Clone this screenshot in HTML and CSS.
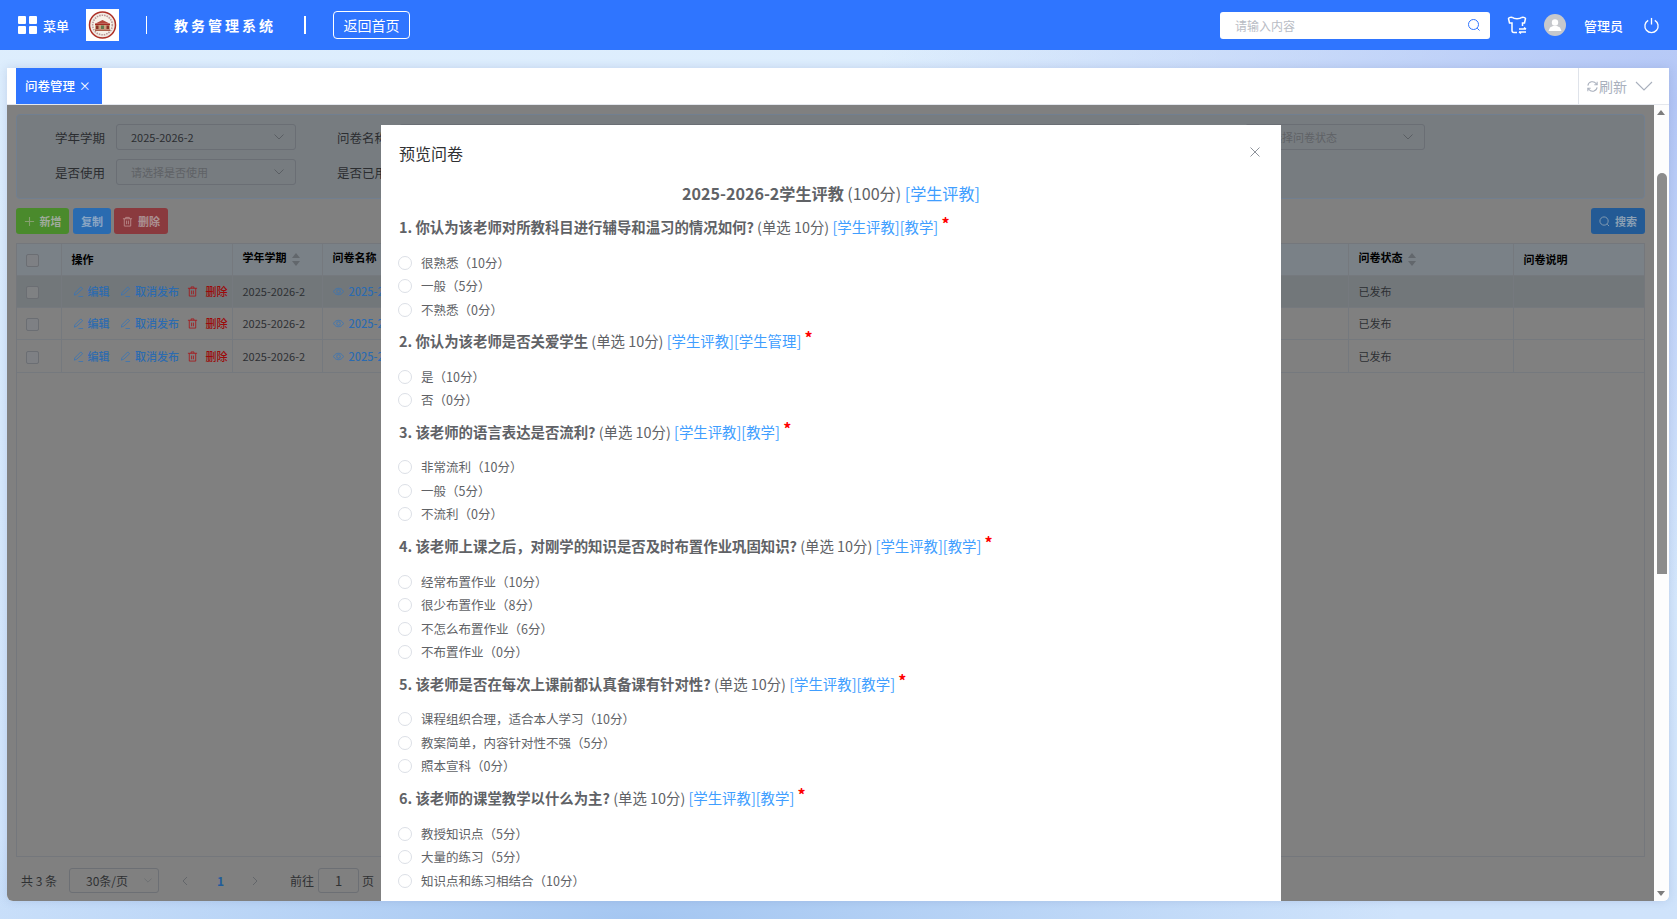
FILE: index.html
```html
<!DOCTYPE html>
<html lang="zh-CN">
<head>
<meta charset="utf-8">
<title>教务管理系统</title>
<link rel="stylesheet" href="styles.css">
</head>
<body>
<div class="app">
  <header class="topbar">
    <svg class="grid-icon" viewBox="0 0 19 18"><rect x="0" y="0" width="8" height="8" rx="1"/><rect x="11" y="0" width="8" height="8" rx="1"/><rect x="0" y="10" width="8" height="8" rx="1"/><rect x="11" y="10" width="8" height="8" rx="1"/></svg>
    <span class="menu-label">菜单</span>
    <div class="logo">
      <svg viewBox="0 0 33 32" width="33" height="32"><rect width="33" height="32" fill="#fff"/><circle cx="16.5" cy="16" r="13" fill="#f1ebe4" stroke="#ad2f26" stroke-width="1.500"/><circle cx="16.5" cy="16" r="9.800" fill="#f7f1e9" stroke="#b99" stroke-width="1.600" stroke-dasharray="1.500 1"/><path d="M9.500 14.500L16.500 11l7 3.500z" fill="#b2463a"/><rect x="9" y="14.500" width="15" height="1.600" fill="#a52a22"/><rect x="9" y="16" width="15" height="4.500" fill="#c9a27f"/><rect x="10" y="16.500" width="2.500" height="3.500" fill="#8a3328"/><rect x="15" y="16.500" width="3" height="3.500" fill="#5f7a50"/><rect x="20.500" y="16.500" width="2.500" height="3.500" fill="#8a3328"/><rect x="9" y="20.500" width="15" height="1.400" fill="#a5503a"/></svg>
    </div>
    <i class="sep-thin"></i>
    <span class="sys-title">教务管理系统</span>
    <i class="sep-thick"></i>
    <a class="home-btn">返回首页</a>
    <div class="spacer"></div>
    <div class="search-box">
      <span class="search-ph">请输入内容</span>
      <svg class="search-ic" viewBox="0 0 14 14"><circle cx="6.500" cy="6.500" r="5" fill="none" stroke="#2f75ff" stroke-width="1"/><path d="M10.200 10.200L12.500 12.500" stroke="#2f75ff" stroke-width="1" fill="none"/></svg>
    </div>
    <svg class="shirt-ic" viewBox="0 0 20 20" fill="none" stroke="#fff" stroke-width="1.500"><path d="M5.500 2.500C4 2 2 2.500 1.500 3.500L2.500 8H5V15.500C5 17 5.500 17.500 7 17.500H10M14.500 2.500C16 2 18 2.500 18.500 3.500L17.500 8H15.500V11M5.500 2.500C7 4 13 4 14.500 2.500"/><path d="M12 14h7M19 14l-2-1.500M12 17h7M12 17l2 1.500"/></svg>
    <div class="avatar"><svg viewBox="0 0 22 22" width="22" height="22"><circle cx="11" cy="8.500" r="3.200" fill="#fff"/><path d="M4.500 17l1.500-3.500 3-1.500h4l3 1.500 1.500 3.500z" fill="#fff"/></svg></div>
    <span class="user-name">管理员</span>
    <svg class="power-ic" viewBox="0 0 18 18" fill="none" stroke="#fff" stroke-width="1.400"><path d="M5.500 3.500a7 7 0 1 0 7 0"/><path d="M9 1v7"/></svg>
  </header>

  <main class="main">
    <section class="card">
      <div class="tabs">
        <div class="tab">问卷管理 <span class="tab-x">×</span></div>
        <div class="spacer"></div>
        <div class="refresh">
          <svg class="refresh-ic" viewBox="0 0 14 14" fill="none" stroke="#a9b0bd" stroke-width="1.100"><path d="M2 6a5 5 0 0 1 9-2l1 1M12 8a5 5 0 0 1-9 2L2 9"/><path d="M12 2v3H9M2 12V9h3"/></svg>
          <span>刷新</span>
          <svg class="refresh-down" viewBox="0 0 18 10" fill="none" stroke="#a9b0bd" stroke-width="1.100"><path d="M1 1l8 8 8-8"/></svg>
        </div>
      </div>

      <div class="body-row">
        <div class="content">
          <div class="filter">
            <div class="f-row">
              <label class="f-label">学年学期</label>
              <div class="select s180"><span class="val">2025-2026-2</span><svg class="chev" viewBox="0 0 10 6"><path d="M.5.5L5 5 9.500.5"/></svg></div>
              <label class="f-label f-l2">问卷名称</label>
              <div class="select s742"><span class="ph">请输入问卷名称</span></div>
              <label class="f-label f-l3">问卷状态</label>
              <div class="select s180b"><span class="ph">请选择问卷状态</span><svg class="chev" viewBox="0 0 10 6"><path d="M.5.5L5 5 9.500.5"/></svg></div>
            </div>
            <div class="f-row">
              <label class="f-label">是否使用</label>
              <div class="select s180"><span class="ph">请选择是否使用</span><svg class="chev" viewBox="0 0 10 6"><path d="M.5.5L5 5 9.500.5"/></svg></div>
              <label class="f-label f-l2">是否已用</label>
            </div>
          </div>

          <div class="toolbar">
            <button class="btn green"><svg class="btn-ic" viewBox="0 0 12 12"><path d="M6 1v10M1 6h10" stroke="#86a070" stroke-width="1.200"/></svg>新增</button>
            <button class="btn blue">复制</button>
            <button class="btn red"><svg class="btn-ic" viewBox="0 0 12 12" fill="none" stroke="#b98a8a" stroke-width="1"><path d="M1 3h10M4 3V1.500h4V3M2.500 3v8h7V3M5 5v4M7 5v4"/></svg>删除</button>
            <div class="spacer"></div>
            <button class="btn navy"><svg class="btn-ic" viewBox="0 0 12 12" fill="none" stroke="#8aa0b5" stroke-width="1"><circle cx="5.500" cy="5.500" r="4.500"/><path d="M9 9l2 2"/></svg>搜索</button>
          </div>

          <div class="table-wrap">
            <table class="grid">
              <colgroup><col class="c-chk"><col class="c-op"><col class="c-term"><col class="c-name"><col class="c-state"><col class="c-desc"></colgroup>
              <thead>
                <tr>
                  <th class="chk-cell"><span class="check"></span></th>
                  <th>操作</th>
                  <th class="sortable">学年学期<span class="sort"><i class="up"></i><i class="down"></i></span></th>
                  <th class="sortable">问卷名称</th>
                  <th class="sortable">问卷状态<span class="sort"><i class="up"></i><i class="down"></i></span></th>
                  <th>问卷说明</th>
                </tr>
              </thead>
              <tbody>
                <tr class="hover">
                  <td class="chk-cell"><span class="check"></span></td>
                  <td class="ops"><svg class="pen" viewBox="0 0 12 12"><path d="M8.500 1L10.500 3 4 9 1.500 10 2 7.500zM6 11.500h5"/></svg><a>编辑</a><svg class="pen" viewBox="0 0 12 12"><path d="M8.500 1L10.500 3 4 9 1.500 10 2 7.500zM6 11.500h5"/></svg><a>取消发布</a><svg class="bin" viewBox="0 0 12 12"><path d="M1 2.500h10M4.500 2.500V1h3v1.500M2.500 2.500V11h7V2.500M5 5v4M7 5v4"/></svg><a class="del">删除</a></td>
                  <td>2025-2026-2</td>
                  <td class="link"><svg class="eye" viewBox="0 0 12 12"><path d="M.5 6C2 3.500 4 2.500 6 2.500S10 3.500 11.500 6C10 8.500 8 9.500 6 9.500S2 8.500.5 6z"/><circle cx="6" cy="6" r="2"/></svg>2025-2026-2学生评教</td>
                  <td>已发布</td><td></td>
                </tr>
                <tr>
                  <td class="chk-cell"><span class="check"></span></td>
                  <td class="ops"><svg class="pen" viewBox="0 0 12 12"><path d="M8.500 1L10.500 3 4 9 1.500 10 2 7.500zM6 11.500h5"/></svg><a>编辑</a><svg class="pen" viewBox="0 0 12 12"><path d="M8.500 1L10.500 3 4 9 1.500 10 2 7.500zM6 11.500h5"/></svg><a>取消发布</a><svg class="bin" viewBox="0 0 12 12"><path d="M1 2.500h10M4.500 2.500V1h3v1.500M2.500 2.500V11h7V2.500M5 5v4M7 5v4"/></svg><a class="del">删除</a></td>
                  <td>2025-2026-2</td>
                  <td class="link"><svg class="eye" viewBox="0 0 12 12"><path d="M.5 6C2 3.500 4 2.500 6 2.500S10 3.500 11.500 6C10 8.500 8 9.500 6 9.500S2 8.500.5 6z"/><circle cx="6" cy="6" r="2"/></svg>2025-2026-2学生评教</td>
                  <td>已发布</td><td></td>
                </tr>
                <tr class="last">
                  <td class="chk-cell"><span class="check"></span></td>
                  <td class="ops"><svg class="pen" viewBox="0 0 12 12"><path d="M8.500 1L10.500 3 4 9 1.500 10 2 7.500zM6 11.500h5"/></svg><a>编辑</a><svg class="pen" viewBox="0 0 12 12"><path d="M8.500 1L10.500 3 4 9 1.500 10 2 7.500zM6 11.500h5"/></svg><a>取消发布</a><svg class="bin" viewBox="0 0 12 12"><path d="M1 2.500h10M4.500 2.500V1h3v1.500M2.500 2.500V11h7V2.500M5 5v4M7 5v4"/></svg><a class="del">删除</a></td>
                  <td>2025-2026-2</td>
                  <td class="link"><svg class="eye" viewBox="0 0 12 12"><path d="M.5 6C2 3.500 4 2.500 6 2.500S10 3.500 11.500 6C10 8.500 8 9.500 6 9.500S2 8.500.5 6z"/><circle cx="6" cy="6" r="2"/></svg>2025-2026-2学生评教</td>
                  <td>已发布</td><td></td>
                </tr>
              </tbody>
            </table>
          </div>

          <div class="pager">
            <span class="total">共 3 条</span>
            <div class="size-select"><span>30条/页</span><svg class="chev small" viewBox="0 0 10 6"><path d="M.5.5L5 5 9.500.5"/></svg></div>
            <svg class="pg-arrow first" viewBox="0 0 6 10"><path d="M5 1L1 5l4 4"/></svg>
            <span class="pg-num">1</span>
            <svg class="pg-arrow" viewBox="0 0 6 10"><path d="M1 1l4 4-4 4"/></svg>
            <span class="goto">前往</span>
            <span class="pg-input">1</span>
            <span class="goto-end">页</span>
          </div>

          <div class="dialog">
            <div class="d-head"><span class="d-title">预览问卷</span><svg class="d-close" viewBox="0 0 10 10"><path d="M.5.5l9 9M9.500.5l-9 9"/></svg></div>
            <div class="d-body">
              <h2 class="paper"><b>2025-2026-2学生评教</b> (100分) <a>[学生评教]</a></h2>

              <h3 class="q"><b>1. 你认为该老师对所教科目进行辅导和温习的情况如何?</b> (单选 10分) <a>[学生评教][教学]</a> <sup>*</sup></h3>
              <ul class="opts">
                <li>很熟悉（10分）</li><li>一般（5分）</li><li>不熟悉（0分）</li>
              </ul>
              <h3 class="q"><b>2. 你认为该老师是否关爱学生</b> (单选 10分) <a>[学生评教][学生管理]</a> <sup>*</sup></h3>
              <ul class="opts">
                <li>是（10分）</li><li>否（0分）</li>
              </ul>
              <h3 class="q"><b>3. 该老师的语言表达是否流利?</b> (单选 10分) <a>[学生评教][教学]</a> <sup>*</sup></h3>
              <ul class="opts">
                <li>非常流利（10分）</li><li>一般（5分）</li><li>不流利（0分）</li>
              </ul>
              <h3 class="q"><b>4. 该老师上课之后，对刚学的知识是否及时布置作业巩固知识?</b> (单选 10分) <a>[学生评教][教学]</a> <sup>*</sup></h3>
              <ul class="opts">
                <li>经常布置作业（10分）</li><li>很少布置作业（8分）</li><li>不怎么布置作业（6分）</li><li>不布置作业（0分）</li>
              </ul>
              <h3 class="q"><b>5. 该老师是否在每次上课前都认真备课有针对性?</b> (单选 10分) <a>[学生评教][教学]</a> <sup>*</sup></h3>
              <ul class="opts">
                <li>课程组织合理，适合本人学习（10分）</li><li>教案简单，内容针对性不强（5分）</li><li>照本宣科（0分）</li>
              </ul>
              <h3 class="q"><b>6. 该老师的课堂教学以什么为主?</b> (单选 10分) <a>[学生评教][教学]</a> <sup>*</sup></h3>
              <ul class="opts">
                <li>教授知识点（5分）</li><li>大量的练习（5分）</li><li>知识点和练习相结合（10分）</li>
              </ul>
            </div>
          </div>
        </div>
        <div class="vscroll">
          <i class="arr-up"></i>
          <div class="thumb"></div>
          <i class="arr-down"></i>
        </div>
      </div>
    </section>
  </main>
</div>
</body>
</html>
```

FILE: styles.css
```css
* { box-sizing: border-box; }
html, body { margin: 0; padding: 0; background: #fff; overflow: hidden; }
body { font-family: "Noto Sans CJK SC", "Noto Sans", sans-serif; }
.spacer { flex: 1; }

.app {
  height: 919px;
  display: flex;
  flex-direction: column;
  background:
    radial-gradient(ellipse 760px 150px at 640px 919px, #a4c6f1 0%, rgba(164,198,241,0) 100%),
    radial-gradient(ellipse 800px 500px at 1677px 100px, #b3c6f6 0%, rgba(179,198,246,0) 100%),
    linear-gradient(180deg, #deeefd 0%, #cfe3fb 100%);
}

.topbar {
  height: 50px;
  flex: none;
  background: #2f75ff;
  display: flex;
  align-items: center;
  color: #fff;
}
.grid-icon { width: 19px; height: 18px; margin-left: 18px; fill: #fff; }
.menu-label { margin-left: 6px; font-size: 13px; font-weight: 500; width: 25px; white-space: nowrap; }
.logo { margin-left: 18px; width: 33px; height: 32px; display: flex; }
.sep-thin { width: 1px; height: 18px; background: #fff; margin-left: 27px; }
.sys-title { margin-left: 27px; font-size: 14px; font-weight: 700; letter-spacing: 3px; width: 102px; white-space: nowrap; }
.sep-thick { width: 2px; height: 18px; background: #fff; margin-left: 28px; }
.home-btn {
  margin-left: 27px;
  width: 77px;
  height: 28px;
  border: 1px solid #fff;
  border-radius: 4px;
  font-size: 14px;
  line-height: 26px;
  text-align: center;
}
.search-box {
  width: 270px;
  height: 27px;
  background: #fff;
  border-radius: 3px;
  display: flex;
  align-items: center;
  justify-content: space-between;
  padding: 0 9px 0 15px;
  margin-right: 1px;
}
.search-ph { font-size: 12px; color: #b8bcc4; }
.search-ic { width: 14px; height: 14px; }
.shirt-ic { width: 20px; height: 20px; margin-left: 16px; }
.avatar { width: 22px; height: 22px; border-radius: 50%; background: #c6c8cc; margin-left: 17px; overflow: hidden; }
.user-name { margin-left: 18px; font-size: 13px; font-weight: 500; width: 40px; white-space: nowrap; }
.power-ic { width: 17px; height: 17px; margin-left: 19px; margin-right: 17px; }

.main { flex: 1; min-height: 0; padding: 18px 8px 18px 7px; display: flex; }
.card {
  flex: 1;
  display: flex;
  flex-direction: column;
  background: #fff;
  border-radius: 0 0 6px 6px;
  overflow: hidden;
  box-shadow: 0 0 10px rgba(90,120,170,.22);
}
.tabs { height: 37px; flex: none; display: flex; border-bottom: 1px solid #e4e7ed; background: #fff; }
.tab {
  margin-left: 9px;
  width: 86px;
  height: 36px;
  background: #2f75ff;
  color: #fff;
  font-size: 12.500px;
  font-weight: 500;
  line-height: 36px;
  padding-left: 9px;
  white-space: nowrap;
}
.tab-x { font-size: 12px; font-weight: 400; margin-left: 1px; }
.refresh {
  width: 91px;
  border-left: 1px solid #dfe3ea;
  display: flex;
  align-items: center;
  font-size: 14px;
  color: #a9b0bd;
  padding-left: 7px;
}
.refresh-ic { width: 13px; height: 13px; }
.refresh-down { width: 18px; height: 10px; margin-left: 8px; }

.body-row { flex: 1; min-height: 0; display: flex; }
.content {
  position: relative;
  width: 1647px;
  background: #808080;
  padding: 9px 9px 0;
  overflow: hidden;
  display: flex;
  flex-direction: column;
}
.vscroll { flex: 1; background: #fdfdfd; position: relative; }
.thumb { position: absolute; top: 68px; left: 3px; width: 10px; height: 401px; background: #8c8c8c; border-radius: 5px 5px 0 0; }
.arr-up, .arr-down { position: absolute; left: 3px; width: 0; height: 0; border-left: 4.500px solid transparent; border-right: 4.500px solid transparent; }
.arr-up { top: 5px; border-bottom: 5px solid #7d7d7d; }
.arr-down { bottom: 5px; border-top: 5px solid #7d7d7d; }

.filter {
  height: 85px;
  flex: none;
  border: 1px solid #717f90;
  border-radius: 4px;
  background: #777c80;
  padding: 9px 0 0 0;
  display: flex;
  flex-direction: column;
  gap: 9px;
}
.f-row { display: flex; align-items: center; height: 26px; }
.f-label { width: 88px; text-align: right; font-size: 12.500px; color: #2b2d30; white-space: nowrap; flex: none; }
.f-l2 { width: 91px; margin-right: 12px; }
.f-l3 { width: 94px; margin-right: 10px; }
.select {
  height: 26px;
  border: 1px solid #6a6e74;
  border-radius: 3px;
  display: flex;
  align-items: center;
  justify-content: space-between;
  padding: 0 11px 0 14px;
  font-size: 11px;
  flex: none;
}
.f-label + .s180 { margin-left: 11px; }
.s180 { width: 180px; }
.s742 { width: 742px; }
.s180b { width: 180px; }
.val { color: #2b2d30; }
.ph { color: #5f6266; }
.chev { width: 10px; height: 6px; fill: none; stroke: #5a5e63; stroke-width: 1; }
.chev.small { width: 8px; height: 5px; stroke: #6a6d70; }

.toolbar { margin-top: 9px; height: 26px; flex: none; display: flex; gap: 4px; }
.btn {
  height: 26px;
  border: 0;
  border-radius: 3px;
  font: 700 11px "Noto Sans CJK SC", sans-serif;
  color: #a0aa9c;
  display: flex;
  align-items: center;
  justify-content: center;
  gap: 5px;
  padding: 0;
}
.btn-ic { width: 11px; height: 11px; }
.btn.green { width: 53px; background: #4a8a2c; }
.btn.blue { width: 38px; background: #2a6bb0; color: #8aa6c4; margin-right: -1px; }
.btn.red { width: 54px; background: #8a3a3e; color: #ab9092; }
.btn.navy { width: 54px; background: #235a95; color: #8ca0b4; }

.table-wrap {
  margin-top: 9px;
  height: 614px;
  flex: none;
  border: 1px solid #74777c;
}
.grid { width: 100%; border-collapse: collapse; table-layout: fixed; font-size: 11px; }
.c-chk { width: 44px; } .c-op { width: 171px; } .c-term { width: 90px; } .c-name { width: 1026px; } .c-state { width: 165px; }
.grid th, .grid td { border-right: 1px solid #75797e; border-bottom: 1px solid #75797e; padding: 0 0 0 10px; text-align: left; white-space: nowrap; overflow: hidden; }
.grid th:last-child, .grid td:last-child { border-right: 0; }
.grid th { height: 31px; background: #7a8187; color: #000; font-weight: 700; }
.grid td { height: 32px; color: #2d2f33; }
.grid tr.last td { height: 33px; }
.grid tr.hover td { background: #72777a; }
.grid .chk-cell { padding: 3px 0 0 9px; }
.grid th.sortable { padding-bottom: 4px; }
.check { display: block; width: 13px; height: 13px; border: 1px solid #6b6e73; border-radius: 2px; background: #7e8084; }
.hover .check { background: #7f8183; }
.sort { display: inline-block; width: 8px; height: 13px; margin-left: 5px; position: relative; vertical-align: middle; }
.sort i { position: absolute; left: 0; width: 0; height: 0; border-left: 4px solid transparent; border-right: 4px solid transparent; }
.sort .up { top: 0; border-bottom: 5px solid #62676c; }
.sort .down { bottom: 0; border-top: 5px solid #62676c; }
.ops a { color: #2c6bb0; font-weight: 500; margin-right: 10.500px; }
.ops a:nth-of-type(2) { margin-right: 7.500px; }
.ops a.del { color: #9c0a0a; margin-right: 0; }
.pen, .bin, .eye { width: 11px; height: 11px; fill: none; stroke-width: .9; vertical-align: -1px; margin-right: 4px; }
.pen, .eye { stroke: #3a74b5; }
.eye { margin-right: 5px; }
.bin { stroke: #a5161a; margin-right: 8px; }
.grid .ops { padding-left: 11px; }
.grid .link { color: #2c6bb0; font-weight: 500; }

.pager { margin-top: 11px; height: 25px; flex: none; display: flex; align-items: center; font-size: 12px; color: #2f3133; }
.total { margin-left: 5px; width: 48px; }
.size-select {
  width: 90px;
  height: 25px;
  border: 1px solid #6c6f74;
  border-radius: 3px;
  display: flex;
  align-items: center;
  justify-content: space-between;
  padding: 0 6px 0 16px;
}
.pg-arrow { width: 6px; height: 10px; fill: none; stroke: #63666a; stroke-width: 1; }
.pg-arrow.first { margin-left: 23px; }
.pg-num { margin: 0 28px 0 29px; color: #1f5c9c; font-weight: 700; font-size: 12px; }
.goto { margin-left: 32px; width: 28px; }
.pg-input {
  width: 41px;
  height: 25px;
  border: 1px solid #6c6f74;
  border-radius: 3px;
  text-align: center;
  line-height: 23px;
  font-size: 13px;
}
.goto-end { margin-left: 3px; }

.dialog {
  position: absolute;
  top: 20px;
  left: 374px;
  width: 900px;
  height: 776px;
  background: #fff;
  overflow: hidden;
}
.d-head { height: 56px; padding: 17px 21px 0 18px; display: flex; justify-content: space-between; }
.d-title { font-size: 16px; line-height: 22px; color: #303133; }
.d-close { width: 10px; height: 10px; margin: 5px 0 0; fill: none; stroke: #8e939b; stroke-width: 1; }
.d-body { padding: 0 18px; color: #606266; }
.paper { margin: 0 0 11px; font-size: 16.100px; line-height: 24px; font-weight: 400; text-align: center; }
.paper a, .q a { color: #409eff; }
.q { margin: 0; font-size: 14.400px; line-height: 22px; font-weight: 400; white-space: nowrap; }
.q sup { color: #f00; font-size: 16px; font-weight: 700; line-height: 0; vertical-align: 3px; }
.opts { list-style: none; margin: 14.600px 0 10.600px -1px; padding: 0; display: flex; flex-direction: column; gap: 3.500px; }
.opts li { height: 20px; line-height: 20px; font-size: 12.500px; display: flex; align-items: center; gap: 9px; }
.opts li::before { content: ""; width: 12px; height: 12px; flex: none; border: 1px solid #dcdfe6; border-radius: 50%; background: #fff; }
```
